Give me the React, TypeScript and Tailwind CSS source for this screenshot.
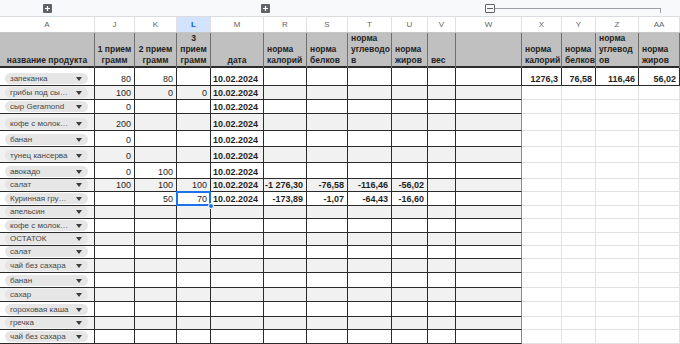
import React from "react";

const cols =
  "grid grid-cols-[95px_40px_42px_34px_53px_43px_41px_44px_36px_28px_66px_40px_34px_43px_41px]";

const letters = ["A", "J", "K", "L", "M", "R", "S", "T", "U", "V", "W", "X", "Y", "Z", "AA"];

const headers: { lines: string[]; align: string }[] = [
  { lines: ["название продукта"], align: "justify-center text-center" },
  { lines: ["1 прием", "грамм"], align: "justify-center text-center" },
  { lines: ["2 прием", "грамм"], align: "justify-center text-center" },
  { lines: ["3", "прием", "грамм"], align: "justify-center text-center" },
  { lines: ["дата"], align: "justify-center text-center" },
  { lines: ["норма", "калорий"], align: "justify-start" },
  { lines: ["норма", "белков"], align: "justify-start" },
  { lines: ["норма", "углеводо", "в"], align: "justify-start" },
  { lines: ["норма", "жиров"], align: "justify-start" },
  { lines: ["вес"], align: "justify-start" },
  { lines: [], align: "justify-start" },
  { lines: ["норма", "калорий"], align: "justify-start" },
  { lines: ["норма", "белков"], align: "justify-start" },
  { lines: ["норма", "углевод", "ов"], align: "justify-start" },
  { lines: ["норма", "жиров"], align: "justify-start" },
];

type Row = {
  name: string;
  h: string;
  j?: string;
  k?: string;
  l?: string;
  date?: boolean;
  norm?: string[];
  totals?: string[];
  sel?: boolean;
};

const rows: Row[] = [
  { name: "запеканка", h: "h-[18px]", j: "80", k: "80", date: true, totals: ["1276,3", "76,58", "116,46", "56,02"] },
  { name: "грибы под сы…", h: "h-[14px]", j: "100", k: "0", l: "0", date: true },
  { name: "сыр Geramond", h: "h-[14px]", j: "0", date: true },
  { name: "кофе с молок…", h: "h-[17px]", j: "200", date: true },
  { name: "банан", h: "h-[16px]", j: "0", date: true },
  { name: "тунец кансерва", h: "h-[16px]", j: "0", date: true },
  { name: "авокадо", h: "h-[16px]", j: "0", k: "100", date: true },
  { name: "салат", h: "h-[13px]", j: "100", k: "100", l: "100", date: true, norm: ["-1 276,30", "-76,58", "-116,46", "-56,02"] },
  { name: "Куринная гру…", h: "h-[14px]", k: "50", l: "70", sel: true, date: true, norm: ["-173,89", "-1,07", "-64,43", "-16,60"] },
  { name: "апельсин", h: "h-[13px]" },
  { name: "кофе с молок…", h: "h-[14px]" },
  { name: "ОСТАТОК", h: "h-[13px]" },
  { name: "салат", h: "h-[13px]" },
  { name: "чай без сахара", h: "h-[14px]" },
  { name: "банан", h: "h-[15px]" },
  { name: "сахар", h: "h-[14px]" },
  { name: "гороховая каша", h: "h-[15px]" },
  { name: "гречка", h: "h-[13px]" },
  { name: "чай без сахара", h: "h-[14px]" },
];

const PlusBox = () => (
  <div className="w-[9px] h-[9px] rounded-[1px] bg-[#5f6368] flex items-center justify-center">
    <svg width="7" height="7" viewBox="0 0 7 7">
      <path d="M3.5 1v5M1 3.5h5" stroke="white" strokeWidth="1.2" />
    </svg>
  </div>
);

const Num = ({ v, bold, bg }: { v?: string; bold?: boolean; bg: string }) => (
  <div className={`flex items-end justify-end pr-[3px] pb-px border-r border-b border-[#2b2b2b] ${bg}`}>
    <span className={`leading-[10px] ${bold ? "font-bold" : ""}`}>{v}</span>
  </div>
);

const Chip = ({ name }: { name: string }) => (
  <div className="flex items-end pl-[5px] pb-px border-r border-b border-[#2b2b2b]">
    <div className="w-[83px] h-[11px] rounded-full bg-[#e6e6e6] flex items-center justify-between pl-[5px] pr-[6px]">
      <span className="text-[#444746] text-[8px] leading-[10px] whitespace-nowrap">{name}</span>
      <svg width="6" height="4" viewBox="0 0 6 4" className="shrink-0">
        <path d="M0 0h6L3 4z" fill="#3c3c3c" />
      </svg>
    </div>
  </div>
);

export default function App() {
  return (
    <div className="w-[680px] h-[344px] overflow-hidden bg-white text-[9px] text-[#1f1f1f] font-['Liberation_Sans',Arial,sans-serif]">
      {/* group toggles */}
      <div className="h-[17px] flex items-center bg-[#f8f9fa] border-b border-[#dadce0]">
        <div className="ml-[43px]">
          <PlusBox />
        </div>
        <div className="ml-[209px]">
          <PlusBox />
        </div>
        <div className="ml-[215px] flex items-center">
          <div className="w-[10px] h-[9px] border border-[#5f6368] rounded-[1px] flex items-center justify-center">
            <div className="w-[6px] h-px bg-[#5f6368]" />
          </div>
          <div className="w-[165px] h-px bg-[#9aa0a6]" />
          <div className="w-px h-[5px] bg-[#9aa0a6] mt-[4px]" />
        </div>
      </div>

      {/* column letters */}
      <div className={`${cols} h-[16px] border-b border-[#c4c7c5]`}>
        {letters.map((l) => (
          <div
            key={l}
            className={`flex items-center justify-center border-r border-[#e1e1e1] text-[8px] ${
              l === "L" ? "bg-[#d3e3fd] text-[#0b57d0] font-bold" : "text-[#5f6368]"
            }`}
          >
            {l}
          </div>
        ))}
      </div>

      {/* header */}
      <div className={`${cols} h-[35px] bg-[#c0c0c0] border-b-2 border-[#2b2b2b]`}>
        {headers.map((h, i) => (
          <div key={i} className={`flex items-end px-[3px] pb-[2px] border-r border-[#6f6f6f] ${h.align}`}>
            <div className="font-bold leading-[11px] text-[8.5px] whitespace-nowrap">
              {h.lines.map((t, k) => (
                <div key={k}>{t}</div>
              ))}
            </div>
          </div>
        ))}
      </div>

      {/* data */}
      {rows.map((r, i) => {
        const bg = i % 2 === 1 ? "bg-[#f1f1f1]" : "bg-white";
        const norm = r.norm ?? ["", "", "", ""];
        return (
          <div key={i} className={`${cols} ${r.h}`}>
            <div className={`${bg} grid`}>
              <Chip name={r.name} />
            </div>
            <Num v={r.j} bg={bg} />
            <Num v={r.k} bg={bg} />
            <div className={`relative flex items-end justify-end pr-[3px] pb-px border-r border-b border-[#2b2b2b] ${bg}`}>
              <span className="leading-[10px]">{r.l}</span>
              {r.sel && (
                <>
                  <div className="absolute -inset-px border-2 border-[#1a73e8] z-10" />
                  <div className="absolute -right-[4px] -bottom-[4px] w-[6px] h-[6px] rounded-full bg-[#1a73e8] border border-white z-20" />
                </>
              )}
            </div>
            <div className={`flex items-end pl-[2px] pb-px border-r border-b border-[#2b2b2b] ${bg}`}>
              {r.date && <span className="font-bold leading-[10px]">10.02.2024</span>}
            </div>
            {norm.map((v, k) => (
              <Num key={k} v={v} bold bg={bg} />
            ))}
            <div className={`border-r border-b border-[#2b2b2b] ${bg}`} />
            <div className={`border-r border-b ${i === 0 ? "border-[#2b2b2b]" : "border-r-[#8a8a8a] border-b-[#2b2b2b]"} ${bg}`} />
            {(r.totals ?? ["", "", "", ""]).map((v, k) =>
              i === 0 ? (
                <Num key={k} v={v} bold bg="bg-white" />
              ) : (
                <div key={k} className="border-r border-b border-[#e2e2e2] bg-white" />
              )
            )}
          </div>
        );
      })}
    </div>
  );
}
